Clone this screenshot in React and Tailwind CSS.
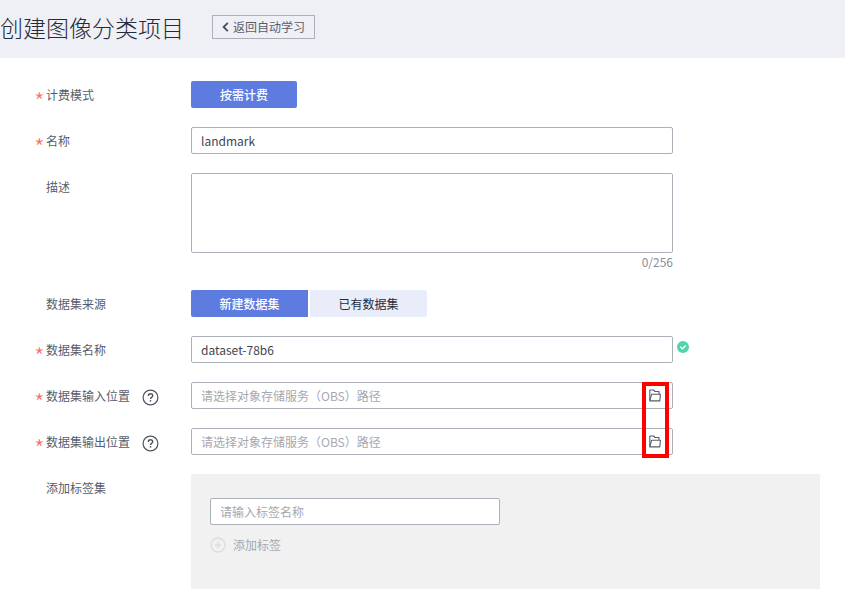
import { useState } from "react";

const MAX_DESC = 256;

const INPUT_CLASS =
  "block w-full h-[27px] rounded-xs border border-[#adb0b8] bg-white px-[9px] text-xs text-[#40454f] placeholder-[#a5a8b0] focus:outline-none focus:border-[#5e7ce0]";

// ─── Icons ───
function ChevronLeftIcon() {
  return (
    <svg width="7" height="10" viewBox="0 0 7 10" fill="none" stroke="#464c59" strokeWidth="1.8" aria-hidden="true">
      <path d="M5.8 0.8L1.6 5l4.2 4.2" />
    </svg>
  );
}

function HelpIcon() {
  return (
    <svg width="17" height="17" viewBox="0 0 17 17" fill="none" stroke="#50555f" strokeWidth="1.2" aria-hidden="true">
      <circle cx="8.5" cy="8.5" r="7.4" />
      <path d="M6.3 6.9c0-1.4 1-2.2 2.2-2.2s2.2.8 2.2 2c0 1.6-2.2 1.7-2.2 3.3" strokeWidth="1.4" />
      <path d="M8.5 11.1v1.5" strokeWidth="1.5" />
    </svg>
  );
}

function FolderIcon() {
  return (
    <svg width="12" height="13" viewBox="0 0 12 13" fill="none" stroke="#575d6c" strokeWidth="1.1" strokeLinejoin="round" aria-hidden="true">
      <path d="M0.8 11.6V1h3.8l1.4 1.5h4v2.7" />
      <path d="M0.8 11.9L2.6 5.2h8.8l-0.6 6.7z" />
    </svg>
  );
}

function SuccessIcon() {
  return (
    <svg width="12" height="12" viewBox="0 0 12 12" fill="none" role="img" aria-label="校验通过">
      <circle cx="6" cy="6" r="6" fill="#50d4ab" />
      <path d="M3.2 5.8l2.2 2 3.4-3.4" stroke="#fff" strokeWidth="1.4" />
    </svg>
  );
}

function PlusCircleIcon() {
  return (
    <svg width="16" height="16" viewBox="0 0 16 16" fill="none" stroke="#dcdde4" strokeWidth="1.3" aria-hidden="true">
      <circle cx="8" cy="8" r="7" />
      <path d="M4.8 8h6.4M8 4.8v6.4" />
    </svg>
  );
}

// ─── Form pieces ───
function FormRow({ label, htmlFor, required, help, children }) {
  const LabelTag = htmlFor ? "label" : "span";
  return (
    <div className="grid grid-cols-[157px_minmax(0,1fr)]">
      <div className="flex h-[27px] items-center">
        <span className="w-3 shrink-0 pt-3 text-2xl leading-none font-light text-[#f66f6a]" aria-hidden="true">
          {required ? "*" : ""}
        </span>
        <LabelTag htmlFor={htmlFor} className="whitespace-nowrap text-[#575d6c]">
          {label}
        </LabelTag>
        {help && (
          <button type="button" aria-label={`${label}说明`} className="ml-3 pt-1">
            <HelpIcon />
          </button>
        )}
      </div>
      <div>{children}</div>
    </div>
  );
}

function PathField({ id, value, onChange, children }) {
  return (
    <div className="relative max-w-[482px]">
      <input
        id={id}
        className={INPUT_CLASS}
        value={value}
        onChange={(e) => onChange(e.target.value)}
        placeholder="请选择对象存储服务（OBS）路径"
      />
      <button type="button" aria-label="选择路径" className="absolute inset-y-0 right-3">
        <FolderIcon />
      </button>
      {children}
    </div>
  );
}

export default function App() {
  const [name, setName] = useState("landmark");
  const [description, setDescription] = useState("");
  const [source, setSource] = useState("new");
  const [datasetName, setDatasetName] = useState("dataset-78b6");
  const [inputPath, setInputPath] = useState("");
  const [outputPath, setOutputPath] = useState("");
  const [tag, setTag] = useState("");

  const tabClass = (active) =>
    active ? "bg-[#5e7ce0] font-medium text-white" : "bg-[#e9edfa] text-[#252b3a]";

  return (
    <div className="min-h-screen bg-white font-['Noto_Sans_CJK_SC',sans-serif] text-xs">
      {/* Header */}
      <header className="flex h-[58px] items-center gap-7 bg-[#eef0f5] pb-1">
        <h1 className="whitespace-nowrap text-[23px] leading-8 font-light text-[#252b3a]">创建图像分类项目</h1>
        <button
          type="button"
          className="flex h-6 items-center gap-1 whitespace-nowrap border border-[#adb0b8] px-[9px] text-[#575d6c]"
        >
          <ChevronLeftIcon />
          返回自动学习
        </button>
      </header>

      <form className="flex flex-col gap-[19px] pt-[23px] pr-[25px] pb-5 pl-[34px]" onSubmit={(e) => e.preventDefault()}>
        <FormRow label="计费模式" required>
          <button type="button" className="h-[27px] w-[106px] rounded-xs bg-[#5e7ce0] font-medium text-white">
            按需计费
          </button>
        </FormRow>

        <FormRow label="名称" htmlFor="name" required>
          <div className="max-w-[482px]">
            <input id="name" className={INPUT_CLASS} value={name} onChange={(e) => setName(e.target.value)} />
          </div>
        </FormRow>

        {/* Description */}
        <FormRow label="描述" htmlFor="description">
          <div className="max-w-[482px]">
            <textarea
              id="description"
              className="block h-20 w-full resize-none rounded-xs border border-[#adb0b8] px-[9px] py-1 text-[#40454f] focus:border-[#5e7ce0] focus:outline-none"
              value={description}
              onChange={(e) => setDescription(e.target.value.slice(0, MAX_DESC))}
            />
            <span className="block text-right leading-[18px] text-[#8a8e99]">
              {description.length}/{MAX_DESC}
            </span>
          </div>
        </FormRow>

        {/* Dataset */}
        <FormRow label="数据集来源">
          <div className="flex gap-0.5">
            <button
              type="button"
              onClick={() => setSource("new")}
              className={`h-[27px] w-[117px] rounded-l-xs ${tabClass(source === "new")}`}
            >
              新建数据集
            </button>
            <button
              type="button"
              onClick={() => setSource("existing")}
              className={`h-[27px] w-[117px] rounded-r-xs ${tabClass(source === "existing")}`}
            >
              已有数据集
            </button>
          </div>
        </FormRow>

        <FormRow label="数据集名称" htmlFor="dataset-name" required>
          <div className="flex gap-1">
            <div className="w-full max-w-[482px]">
              <input
                id="dataset-name"
                className={INPUT_CLASS}
                value={datasetName}
                onChange={(e) => setDatasetName(e.target.value)}
              />
            </div>
            <span className="shrink-0 pt-[5px]">
              <SuccessIcon />
            </span>
          </div>
        </FormRow>

        <FormRow label="数据集输入位置" htmlFor="input-path" required help>
          <PathField id="input-path" value={inputPath} onChange={setInputPath}>
            {/* Highlight frame round both folder buttons */}
            <div className="pointer-events-none absolute top-0 right-1 z-10 h-[76px] w-[27px] border-4 border-[#fe0000]" />
          </PathField>
        </FormRow>

        <FormRow label="数据集输出位置" htmlFor="output-path" required help>
          <PathField id="output-path" value={outputPath} onChange={setOutputPath} />
        </FormRow>

        {/* Tags */}
        <FormRow label="添加标签集" htmlFor="tag">
          <div className="min-h-[115px] bg-[#f1f1f1] px-[19px] py-6">
            <div className="max-w-[290px]">
              <input
                id="tag"
                className={INPUT_CLASS}
                value={tag}
                onChange={(e) => setTag(e.target.value)}
                placeholder="请输入标签名称"
              />
            </div>
            <button type="button" className="mt-3 flex items-center gap-[7px] text-[#a5a8b0]">
              <PlusCircleIcon />
              添加标签
            </button>
          </div>
        </FormRow>
      </form>
    </div>
  );
}
